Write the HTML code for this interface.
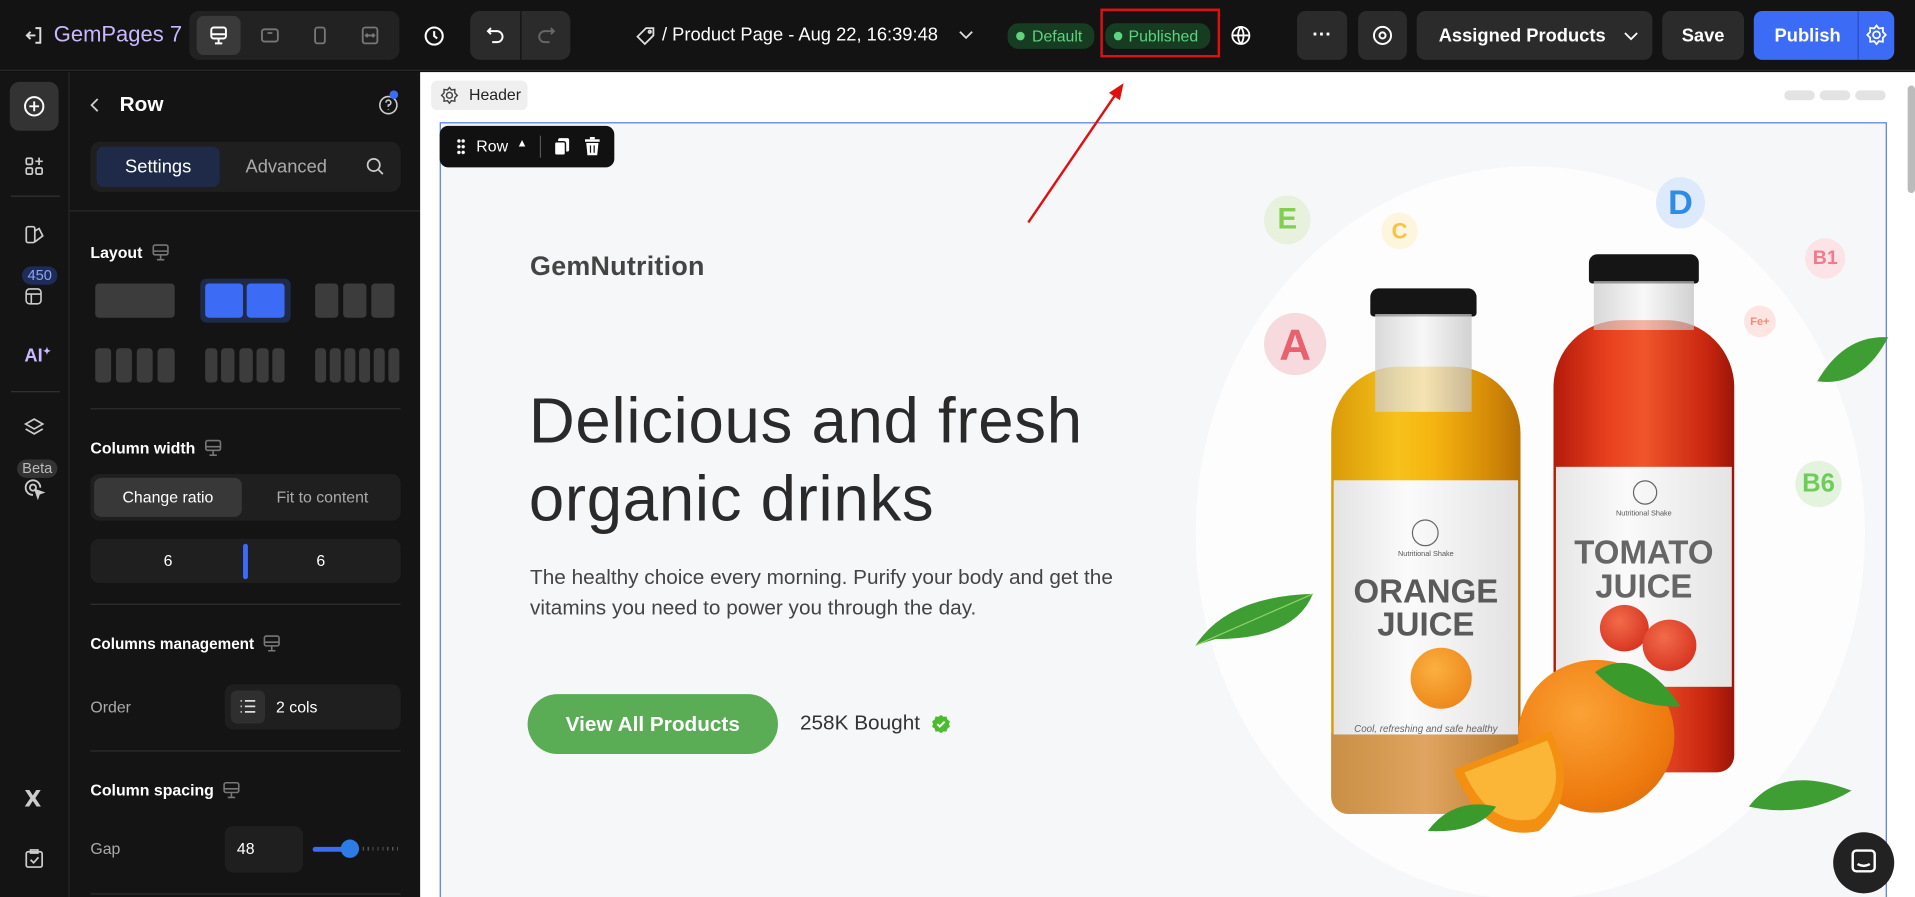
<!DOCTYPE html>
<html><head><meta charset="utf-8"><style>
*{box-sizing:border-box;margin:0;padding:0}
html,body{width:1915px;height:897px;overflow:hidden;background:#111}
#w{position:absolute;left:0;top:0;width:1568px;height:734px;transform:scale(1.22130,1.22207);transform-origin:0 0;font-family:"Liberation Sans",sans-serif;overflow:hidden;background:#111}
.a{position:absolute}
.btn{position:absolute;background:#2b2b2b;border-radius:7px;color:#fff;display:flex;align-items:center;justify-content:center;font-weight:bold;font-size:16px}
.lbl{position:absolute;color:#fff;font-weight:bold;font-size:13px;display:flex;align-items:center;gap:7px}
.sub{position:absolute;color:#aaa;font-size:13px}
.blk{position:absolute;background:#3c3c3c;border-radius:3px}
.hr{position:absolute;left:74px;width:254px;height:1px;background:#2e2e2e}
.vit{position:absolute;border-radius:50%;display:flex;align-items:center;justify-content:center;font-weight:bold}
</style></head><body><div id="w">
<!-- top bar -->
<div class="a" style="left:0;top:0;width:1568px;height:58px;background:#131313;border-bottom:1px solid #2a2a2a"></div>
<svg class="a" style="left:19px;top:20px" width="18" height="18" viewBox="0 0 18 18" fill="none" stroke="#ddd" stroke-width="1.6"><path d="M10 3H14V15H10M3 9H10M6 6L3 9L6 12"/></svg>
<div class="a" style="left:44px;top:18px;color:#c9b8ff;font-size:18px">GemPages 7</div>
<div class="a" style="left:155px;top:9px;width:172px;height:40px;background:#222;border-radius:8px"></div>
<div class="a" style="left:161px;top:13px;width:36px;height:32px;background:#3a3a3a;border-radius:6px"></div>
<svg class="a" style="left:171px;top:21px" width="16" height="16" viewBox="0 0 16 16" fill="none" stroke="#fff" stroke-width="1.6"><rect x="2" y="1.5" width="12" height="9" rx="2"/><path d="M2 7H14M8 11V14M5 14.5H11"/></svg>
<svg class="a" style="left:213px;top:21px" width="16" height="16" viewBox="0 0 16 16" fill="none" stroke="#777" stroke-width="1.5"><rect x="1.5" y="3" width="13" height="10" rx="2"/><path d="M6 6H10"/></svg>
<svg class="a" style="left:254px;top:21px" width="16" height="16" viewBox="0 0 16 16" fill="none" stroke="#777" stroke-width="1.5"><rect x="4" y="1.5" width="8" height="13" rx="2"/></svg>
<svg class="a" style="left:295px;top:21px" width="16" height="16" viewBox="0 0 16 16" fill="none" stroke="#777" stroke-width="1.5"><rect x="2" y="1.5" width="12" height="13" rx="2"/><path d="M5 8H11M6 6.5L4.5 8L6 9.5M10 6.5L11.5 8L10 9.5"/></svg>
<svg class="a" style="left:347px;top:21px" width="17" height="17" viewBox="0 0 17 17" fill="none" stroke="#fff" stroke-width="1.7"><circle cx="8.5" cy="8.5" r="7"/><path d="M8.5 4.5V8.5L11 10.5"/></svg>
<div class="a" style="left:385px;top:9px;width:82px;height:40px;background:#2b2b2b;border-radius:8px"></div>
<div class="a" style="left:426px;top:9px;width:1px;height:40px;background:#111"></div>
<svg class="a" style="left:397px;top:20px" width="18" height="18" viewBox="0 0 18 18" fill="none" stroke="#fff" stroke-width="1.6"><path d="M5 3L2.5 5.5L5 8M3 5.5H10A4.5 4.5 0 0 1 10 14.5H6"/></svg>
<svg class="a" style="left:438px;top:20px" width="18" height="18" viewBox="0 0 18 18" fill="none" stroke="#666" stroke-width="1.6"><path d="M13 3L15.5 5.5L13 8M15 5.5H8A4.5 4.5 0 0 0 8 14.5H12"/></svg>
<svg class="a" style="left:520px;top:21px" width="17" height="17" viewBox="0 0 17 17" fill="none" stroke="#ddd" stroke-width="1.5"><path d="M9 2H15V8L8 15L2 9Z"/><circle cx="12" cy="5" r="1"/></svg>
<div class="a" style="left:542px;top:20px;color:#fff;font-size:15px">/ Product Page - Aug 22, 16:39:48</div>
<svg class="a" style="left:784px;top:24px" width="14" height="10" viewBox="0 0 14 10" fill="none" stroke="#ddd" stroke-width="1.5"><path d="M2 2L7 7L12 2"/></svg>
<div class="a" style="left:825px;top:19px;width:71px;height:21px;background:#163d22;border-radius:9px;color:#5fd37e;font-size:13px;line-height:21px;padding-left:20px">Default</div>
<div class="a" style="left:832px;top:26px;width:7px;height:7px;border-radius:50%;background:#5fd37e"></div>
<div class="a" style="left:905px;top:19px;width:86px;height:21px;background:#163d22;border-radius:9px;color:#5fd37e;font-size:13px;line-height:21px;padding-left:19px">Published</div>
<div class="a" style="left:912px;top:26px;width:7px;height:7px;border-radius:50%;background:#5fd37e"></div>
<div class="a" style="left:901px;top:7px;width:98px;height:40px;border:2px solid #e01010"></div>
<svg class="a" style="left:1006px;top:20px" width="20" height="20" viewBox="0 0 20 20" fill="none" stroke="#fff" stroke-width="1.5"><circle cx="10" cy="9" r="7"/><path d="M3 9H17M10 2C7 6 7 12 10 16M10 2C13 6 13 12 10 16"/></svg>
<div class="btn" style="left:1062px;top:9px;width:41px;height:40px">···</div>
<div class="btn" style="left:1112px;top:9px;width:40px;height:40px"><svg width="18" height="18" viewBox="0 0 18 18" fill="none" stroke="#fff" stroke-width="1.6"><circle cx="9" cy="9" r="7"/><circle cx="9" cy="9" r="2.5"/></svg></div>
<div class="btn" style="left:1160px;top:9px;width:193px;height:40px;justify-content:flex-start;padding-left:18px;font-size:15px">Assigned Products<svg style="margin-left:14px" width="13" height="9" viewBox="0 0 13 9" fill="none" stroke="#fff" stroke-width="1.5"><path d="M1.5 2L6.5 7L11.5 2"/></svg></div>
<div class="btn" style="left:1361px;top:9px;width:67px;height:40px;font-size:15px">Save</div>
<div class="btn" style="left:1436px;top:9px;width:115px;height:40px;background:#3c6cf6;justify-content:flex-start;padding-left:17px;font-size:15px">Publish</div>
<div class="a" style="left:1521px;top:9px;width:1px;height:40px;background:#2a4fc0"></div>
<svg class="a" style="left:1527px;top:19px" width="19" height="19" viewBox="0 0 20 20" fill="none" stroke="#fff" stroke-width="1.5"><circle cx="10" cy="10" r="3"/><path d="M10 2L12 4.5L15.5 4L15.5 7.5L18 10L15.5 12.5L15.5 16L12 15.5L10 18L8 15.5L4.5 16L4.5 12.5L2 10L4.5 7.5L4.5 4L8 4.5Z"/></svg>

<!-- left rail -->
<div class="a" style="left:0;top:59px;width:57px;height:675px;background:#141414;border-right:1px solid #2a2a2a"></div>
<div class="a" style="left:8px;top:67px;width:40px;height:40px;background:#333;border-radius:8px"></div>
<svg class="a" style="left:18px;top:77px" width="20" height="20" viewBox="0 0 20 20" fill="none" stroke="#fff" stroke-width="1.6"><circle cx="10" cy="10" r="7.5"/><path d="M10 6V14M6 10H14"/></svg>
<svg class="a" style="left:20px;top:128px" width="16" height="16" viewBox="0 0 16 16" fill="none" stroke="#ccc" stroke-width="1.4"><rect x="1.5" y="1.5" width="5" height="5" rx="1"/><rect x="1.5" y="9.5" width="5" height="5" rx="1"/><rect x="9.5" y="9.5" width="5" height="5" rx="1"/><path d="M12 1V7M9 4H15"/></svg>
<div class="a" style="left:9px;top:160px;width:40px;height:1px;background:#333"></div>
<svg class="a" style="left:20px;top:184px" width="16" height="16" viewBox="0 0 16 16" fill="none" stroke="#ccc" stroke-width="1.4"><rect x="1.5" y="1.5" width="7" height="13" rx="1.5"/><path d="M8.5 5L12 3L15 9L8.5 14"/></svg>
<div class="a" style="left:18px;top:218px;width:29px;height:15px;border-radius:8px;background:#1f2c55;color:#8aa4ff;font-size:12px;text-align:center;line-height:15px">450</div>
<svg class="a" style="left:20px;top:235px" width="15" height="15" viewBox="0 0 16 16" fill="none" stroke="#ccc" stroke-width="1.4"><rect x="1.5" y="1.5" width="13" height="13" rx="3"/><path d="M1.5 6H14.5M6 6V14.5"/></svg>
<div class="a" style="left:20px;top:283px;color:#c9b8ff;font-weight:bold;font-size:15px">AI<sup style="font-size:8px">✦</sup></div>
<div class="a" style="left:9px;top:320px;width:40px;height:1px;background:#333"></div>
<svg class="a" style="left:19px;top:341px" width="18" height="18" viewBox="0 0 18 18" fill="none" stroke="#ccc" stroke-width="1.4"><path d="M9 2L16 6L9 10L2 6Z"/><path d="M2 10L9 14L16 10"/></svg>
<div class="a" style="left:14px;top:376px;width:33px;height:15px;border-radius:8px;background:#333;color:#bbb;font-size:12px;text-align:center;line-height:15px">Beta</div>
<svg class="a" style="left:19px;top:391px" width="18" height="18" viewBox="0 0 18 18" fill="none" stroke="#ccc" stroke-width="1.5"><path d="M14 8A6 6 0 1 0 8 14"/><circle cx="8" cy="8" r="2.5"/><path d="M10 10L16 12L13 13L12 16Z" fill="#ccc"/></svg>
<div class="a" style="left:20px;top:644px;color:#ccc;font-weight:bold;font-size:18px;font-family:'DejaVu Sans'">X</div>
<svg class="a" style="left:20px;top:694px" width="16" height="17" viewBox="0 0 16 17" fill="none" stroke="#ccc" stroke-width="1.4"><rect x="1.5" y="3" width="13" height="12.5" rx="1.5"/><path d="M5 1.5H11V4H5Z"/><path d="M5 9.5L7.5 12L11.5 7.5"/></svg>

<!-- settings panel -->
<div class="a" style="left:57px;top:59px;width:287px;height:675px;background:#141414"></div>
<svg class="a" style="left:72px;top:79px" width="12" height="14" viewBox="0 0 12 14" fill="none" stroke="#ccc" stroke-width="1.5"><path d="M8 2L3 7L8 12"/></svg>
<div class="a" style="left:98px;top:76px;color:#fff;font-weight:bold;font-size:17px">Row</div>
<svg class="a" style="left:309px;top:77px" width="18" height="18" viewBox="0 0 18 18" fill="none" stroke="#ccc" stroke-width="1.3"><circle cx="9" cy="9" r="7"/><path d="M7 7A2 2 0 1 1 9 9V10.5M9 12.5V13"/></svg>
<div class="a" style="left:319px;top:74px;width:7px;height:7px;border-radius:50%;background:#3c6cf6"></div>
<div class="a" style="left:74px;top:116px;width:254px;height:41px;background:#1f1f1f;border-radius:8px"></div>
<div class="a" style="left:79px;top:120px;width:101px;height:33px;background:#1e2a48;border-radius:6px;color:#fff;font-size:15px;text-align:center;line-height:33px">Settings</div>
<div class="a" style="left:201px;top:128px;color:#aaa;font-size:15px">Advanced</div>
<svg class="a" style="left:299px;top:128px" width="16" height="16" viewBox="0 0 16 16" fill="none" stroke="#ccc" stroke-width="1.4"><circle cx="7" cy="7" r="5"/><path d="M11 11L14.5 14.5"/></svg>
<div class="a" style="left:57px;top:172px;width:287px;height:1px;background:#2a2a2a"></div>
<div class="lbl" style="left:74px;top:199px">Layout<svg width="15" height="15" viewBox="0 0 15 15" fill="none" stroke="#777" stroke-width="1.3"><rect x="1.5" y="1.5" width="12" height="8" rx="1.5"/><path d="M1.5 6.5H13.5M7.5 10V13M4.5 13.5H10.5"/></svg></div>
<div class="blk" style="left:78px;top:232px;width:65px;height:28px"></div>
<div class="a" style="left:164px;top:228px;width:74px;height:36px;background:#1e2a48;border-radius:5px"></div>
<div class="a" style="left:168px;top:232px;width:31px;height:28px;background:#3c6cf6;border-radius:3px"></div>
<div class="a" style="left:202px;top:232px;width:31px;height:28px;background:#3c6cf6;border-radius:3px"></div>
<div class="blk" style="left:258px;top:232px;width:19px;height:28px"></div><div class="blk" style="left:281px;top:232px;width:19px;height:28px"></div><div class="blk" style="left:304px;top:232px;width:19px;height:28px"></div>
<div class="blk" style="left:78px;top:285px;width:13px;height:28px"></div><div class="blk" style="left:95px;top:285px;width:13px;height:28px"></div><div class="blk" style="left:112px;top:285px;width:13px;height:28px"></div><div class="blk" style="left:129px;top:285px;width:14px;height:28px"></div>
<div class="blk" style="left:168px;top:285px;width:10px;height:28px"></div><div class="blk" style="left:181px;top:285px;width:11px;height:28px"></div><div class="blk" style="left:196px;top:285px;width:11px;height:28px"></div><div class="blk" style="left:210px;top:285px;width:10px;height:28px"></div><div class="blk" style="left:223px;top:285px;width:10px;height:28px"></div>
<div class="blk" style="left:258px;top:285px;width:9px;height:28px"></div><div class="blk" style="left:270px;top:285px;width:9px;height:28px"></div><div class="blk" style="left:282px;top:285px;width:9px;height:28px"></div><div class="blk" style="left:294px;top:285px;width:9px;height:28px"></div><div class="blk" style="left:306px;top:285px;width:9px;height:28px"></div><div class="blk" style="left:318px;top:285px;width:9px;height:28px"></div>
<div class="hr" style="top:334px"></div>
<div class="lbl" style="left:74px;top:359px">Column width<svg width="15" height="15" viewBox="0 0 15 15" fill="none" stroke="#777" stroke-width="1.3"><rect x="1.5" y="1.5" width="12" height="8" rx="1.5"/><path d="M1.5 6.5H13.5M7.5 10V13M4.5 13.5H10.5"/></svg></div>
<div class="a" style="left:74px;top:388px;width:254px;height:38px;background:#1f1f1f;border-radius:7px"></div>
<div class="a" style="left:77px;top:391px;width:121px;height:32px;background:#383838;border-radius:6px;color:#fff;font-size:13px;text-align:center;line-height:32px">Change ratio</div>
<div class="a" style="left:200px;top:391px;width:128px;height:32px;color:#aaa;font-size:13px;text-align:center;line-height:32px">Fit to content</div>
<div class="a" style="left:74px;top:441px;width:254px;height:36px;background:#1f1f1f;border-radius:7px"></div>
<div class="a" style="left:134px;top:451px;color:#fff;font-size:13px">6</div>
<div class="a" style="left:259px;top:451px;color:#fff;font-size:13px">6</div>
<div class="a" style="left:199px;top:445px;width:4px;height:29px;background:#3c6cf6;border-radius:2px"></div>
<div class="hr" style="top:494px"></div>
<div class="lbl" style="left:74px;top:519px;font-size:12.5px">Columns management<svg width="15" height="15" viewBox="0 0 15 15" fill="none" stroke="#777" stroke-width="1.3"><rect x="1.5" y="1.5" width="12" height="8" rx="1.5"/><path d="M1.5 6.5H13.5M7.5 10V13M4.5 13.5H10.5"/></svg></div>
<div class="sub" style="left:74px;top:571px">Order</div>
<div class="a" style="left:184px;top:560px;width:144px;height:37px;background:#1f1f1f;border-radius:7px"></div>
<div class="a" style="left:189px;top:565px;width:28px;height:27px;background:#2f2f2f;border-radius:5px"></div>
<svg class="a" style="left:196px;top:572px" width="14" height="12" viewBox="0 0 14 12" fill="none" stroke="#ddd" stroke-width="1.4"><path d="M1 1.5H2M1 6H2M1 10.5H2M4.5 1.5H13M4.5 6H13M4.5 10.5H13"/></svg>
<div class="a" style="left:226px;top:571px;color:#fff;font-size:13px">2 cols</div>
<div class="hr" style="top:614px"></div>
<div class="lbl" style="left:74px;top:639px">Column spacing<svg width="15" height="15" viewBox="0 0 15 15" fill="none" stroke="#777" stroke-width="1.3"><rect x="1.5" y="1.5" width="12" height="8" rx="1.5"/><path d="M1.5 6.5H13.5M7.5 10V13M4.5 13.5H10.5"/></svg></div>
<div class="sub" style="left:74px;top:687px">Gap</div>
<div class="a" style="left:184px;top:676px;width:64px;height:38px;background:#1f1f1f;border-radius:7px;color:#fff;font-size:13px;line-height:38px;padding-left:10px">48</div>
<div class="a" style="left:256px;top:693px;width:32px;height:4px;background:#3c6cf6;border-radius:2px"></div>
<div class="a" style="left:279px;top:687px;width:15px;height:15px;background:#2d7be5;border-radius:50%"></div>
<div class="a" style="left:297px;top:693px;width:30px;height:3px;background:repeating-linear-gradient(90deg,#555 0 1px,transparent 1px 4px)"></div>
<div class="hr" style="top:731px"></div>

<!-- canvas -->
<div class="a" style="left:344px;top:59px;width:1224px;height:675px;background:#fff"></div>
<div class="a" style="left:353px;top:66px;width:79px;height:24px;background:#efefef;border-radius:5px;font-size:13px;color:#222;line-height:24px;padding-left:31px">Header</div>
<svg class="a" style="left:360px;top:70px" width="16" height="16" viewBox="0 0 20 20" fill="none" stroke="#444" stroke-width="1.5"><circle cx="10" cy="10" r="3"/><path d="M10 2L12 4.5L15.5 4L15.5 7.5L18 10L15.5 12.5L15.5 16L12 15.5L10 18L8 15.5L4.5 16L4.5 12.5L2 10L4.5 7.5L4.5 4L8 4.5Z"/></svg>
<div class="a" style="left:1461px;top:74px;width:25px;height:8px;background:#e3e3e3;border-radius:4px"></div>
<div class="a" style="left:1490px;top:74px;width:25px;height:8px;background:#e3e3e3;border-radius:4px"></div>
<div class="a" style="left:1519px;top:74px;width:25px;height:8px;background:#e3e3e3;border-radius:4px"></div>
<div class="a" style="left:1562px;top:70px;width:6px;height:88px;background:#bbb;border-radius:3px"></div>
<div class="a" style="left:360px;top:100px;width:1185px;height:640px;background:#f6f7f9;border:1px solid #5a7de0;overflow:hidden">
  <div class="a" style="left:618px;top:35px;width:548px;height:600px;border-radius:50%;background:#fdfdfe"></div>
</div>
<!-- row toolbar -->
<div class="a" style="left:360px;top:103px;width:143px;height:34px;background:#111;border-radius:7px"></div>
<div class="a" style="left:374px;top:113px;width:7px;height:14px;background:radial-gradient(circle,#fff 1.2px,transparent 1.6px) 0 0/3.5px 4.7px"></div>
<div class="a" style="left:390px;top:112px;color:#fff;font-size:13px">Row</div>
<div class="a" style="left:423px;top:112px;color:#fff;font-size:9px">▲</div>
<div class="a" style="left:442px;top:111px;width:1px;height:18px;background:#555"></div>
<svg class="a" style="left:453px;top:112px" width="14" height="16" viewBox="0 0 14 16" fill="#fff"><rect x="4" y="1" width="9" height="11" rx="1.5"/><rect x="1" y="4" width="9" height="11" rx="1.5" stroke="#111" stroke-width="1.2"/></svg>
<svg class="a" style="left:478px;top:112px" width="14" height="16" viewBox="0 0 14 16" fill="#fff"><rect x="1" y="2" width="12" height="2"/><rect x="5" y="0" width="4" height="2"/><path d="M2 5H12L11 15H3Z"/><path d="M5.5 7V13M8.5 7V13" stroke="#111" stroke-width="1"/></svg>

<!-- hero text -->
<div class="a" style="left:434px;top:205px;color:#444;font-weight:bold;font-size:22px;letter-spacing:0.2px">GemNutrition</div>
<div class="a" style="left:433px;top:313px;color:#2a2a2a;font-size:52px;line-height:64px;letter-spacing:0.6px">Delicious and fresh<br>organic drinks</div>
<div class="a" style="left:434px;top:460px;color:#444;font-size:17px;line-height:25px">The healthy choice every morning. Purify your body and get the<br>vitamins you need to power you through the day.</div>
<div class="a" style="left:432px;top:568px;width:205px;height:49px;background:#5aac55;border-radius:25px;color:#fff;font-weight:bold;font-size:17px;text-align:center;line-height:49px">View All Products</div>
<div class="a" style="left:655px;top:582px;color:#333;font-size:17px">258K Bought</div>
<svg class="a" style="left:762px;top:584px" width="17" height="17" viewBox="0 0 17 17"><path d="M8.5 1L10.5 2.5L13 2.3L13.7 4.8L15.8 6.3L15 8.5L15.8 10.7L13.7 12.2L13 14.7L10.5 14.5L8.5 16L6.5 14.5L4 14.7L3.3 12.2L1.2 10.7L2 8.5L1.2 6.3L3.3 4.8L4 2.3L6.5 2.5Z" fill="#4cbb2f"/><path d="M5.5 8.5L7.5 10.5L11.5 6.5" stroke="#fff" stroke-width="1.6" fill="none"/></svg>

<!-- vitamins -->
<div class="vit" style="left:1035px;top:160px;width:38px;height:40px;background:#e8f0de;color:#7fcf50;font-size:24px">E</div>
<div class="vit" style="left:1131px;top:174px;width:30px;height:30px;background:#fdf5de;color:#f5c445;font-size:18px">C</div>
<div class="vit" style="left:1356px;top:145px;width:40px;height:42px;background:#dceafb;color:#2d8ce8;font-size:28px">D</div>
<div class="vit" style="left:1478px;top:195px;width:33px;height:33px;background:#fbe3e6;color:#f07a8e;font-size:16px">B1</div>
<div class="vit" style="left:1428px;top:250px;width:26px;height:26px;background:#fde6e2;color:#f08a7a;font-size:9px">Fe+</div>
<div class="vit" style="left:1035px;top:256px;width:51px;height:51px;background:#f7dadd;color:#e8616d;font-size:36px">A</div>
<div class="vit" style="left:1470px;top:377px;width:38px;height:38px;background:#e3f3dd;color:#6ecb5c;font-size:21px">B6</div>

<!-- leaves -->
<svg class="a" style="left:975px;top:478px" width="110" height="60" viewBox="0 0 110 60"><path d="M4 50Q30 10 100 8Q85 45 20 45Z" fill="#3f9e33"/><path d="M4 50Q50 30 100 8" stroke="#8fd36a" stroke-width="1" fill="none"/></svg>
<svg class="a" style="left:1480px;top:272px" width="70" height="50" viewBox="0 0 70 50"><path d="M66 4Q30 2 8 40Q45 45 66 4Z" fill="#3f9e33"/></svg>
<svg class="a" style="left:1428px;top:625px" width="92" height="45" viewBox="0 0 92 45"><path d="M4 35Q30 0 88 22Q50 45 4 35Z" fill="#3f9e33"/></svg>

<!-- red bottle -->
<div class="a" style="left:1301px;top:208px;width:90px;height:24px;background:#151515;border-radius:7px 7px 3px 3px"></div>
<div class="a" style="left:1272px;top:262px;width:148px;height:370px;background:linear-gradient(90deg,#b31a0a,#e8401e 30%,#f0552b 50%,#c8260f 85%,#9c1508);border-radius:55px 55px 14px 14px"></div>
<div class="a" style="left:1305px;top:230px;width:82px;height:40px;background:linear-gradient(90deg,rgba(200,200,200,.7),rgba(245,245,245,.6),rgba(190,190,190,.7))"></div>
<div class="a" style="left:1274px;top:382px;width:144px;height:180px;background:linear-gradient(90deg,#e6e6e6,#fafafa 40%,#e4e4e4)"></div>
<div class="a" style="left:1337px;top:393px;width:20px;height:20px;border:1.5px solid #666;border-radius:50%"></div>
<div class="a" style="left:1276px;top:418px;width:140px;text-align:center;color:#555;font-size:6px">Nutritional Shake</div>
<div class="a" style="left:1276px;top:438px;width:140px;text-align:center;color:#666;font-weight:bold;font-size:27px;line-height:28px">TOMATO<br>JUICE</div>
<div class="a" style="left:1310px;top:495px;width:40px;height:38px;border-radius:50%;background:radial-gradient(circle at 40% 35%,#f26b4a,#cf2414)"></div>
<div class="a" style="left:1345px;top:507px;width:44px;height:42px;border-radius:50%;background:radial-gradient(circle at 40% 35%,#f26b4a,#cf2414)"></div>
<!-- orange bottle -->
<div class="a" style="left:1122px;top:236px;width:87px;height:23px;background:#151515;border-radius:7px 7px 3px 3px"></div>
<div class="a" style="left:1090px;top:300px;width:155px;height:366px;background:linear-gradient(90deg,#d99a08,#f7c21a 35%,#f5b310 55%,#d28806 85%,#b87005);border-radius:55px 55px 14px 14px"></div>
<div class="a" style="left:1126px;top:257px;width:79px;height:80px;background:linear-gradient(90deg,rgba(205,205,205,.75),rgba(245,245,245,.7),rgba(195,195,195,.75))"></div>
<div class="a" style="left:1090px;top:600px;width:155px;height:66px;background:linear-gradient(90deg,#c98f45,#e0a560 50%,#b87a30);border-radius:0 0 14px 14px"></div>
<div class="a" style="left:1092px;top:393px;width:151px;height:208px;background:linear-gradient(90deg,#e3e3e3,#fbfbfb 40%,#e2e2e2)"></div>
<div class="a" style="left:1156px;top:425px;width:22px;height:22px;border:1.5px solid #666;border-radius:50%"></div>
<div class="a" style="left:1092px;top:451px;width:151px;text-align:center;color:#555;font-size:6px">Nutritional Shake</div>
<div class="a" style="left:1092px;top:471px;width:151px;text-align:center;color:#5a5a5a;font-weight:bold;font-size:27px;line-height:27px">ORANGE<br>JUICE</div>
<div class="a" style="left:1155px;top:530px;width:50px;height:50px;border-radius:50%;background:radial-gradient(circle at 40% 35%,#fbb040,#ea7b10)"></div>
<div class="a" style="left:1102px;top:592px;width:131px;text-align:center;color:#666;font-size:8px;font-style:italic">Cool, refreshing and safe healthy</div>
<!-- big orange -->
<div class="a" style="left:1243px;top:540px;width:128px;height:125px;border-radius:50%;background:radial-gradient(circle at 40% 35%,#fba236,#ef7d10 60%,#d76508)"></div>
<svg class="a" style="left:1300px;top:530px" width="80" height="60" viewBox="0 0 80 60"><path d="M6 20Q40 -4 76 48Q35 50 6 20Z" fill="#3a9a2c"/></svg>
<svg class="a" style="left:1185px;top:590px" width="115" height="100" viewBox="0 0 115 100"><path d="M5 40L85 8Q110 60 75 90Q30 100 5 40Z" fill="#f39012"/><path d="M14 42L82 16Q100 58 72 80Q35 88 14 42Z" fill="#fbb638"/></svg>
<svg class="a" style="left:1165px;top:652px" width="65" height="35" viewBox="0 0 65 35"><path d="M4 28Q25 0 60 8Q45 30 4 28Z" fill="#3a9a2c"/></svg>

<!-- chat bubble -->
<div class="a" style="left:1501px;top:681px;width:50px;height:50px;border-radius:50%;background:#222"></div>
<svg class="a" style="left:1514px;top:693px" width="24" height="24" viewBox="0 0 24 24" fill="none" stroke="#fff" stroke-width="2"><rect x="3" y="3" width="18" height="17" rx="3"/><path d="M7 14Q12 17 17 14"/></svg>

<!-- arrow -->
<svg class="a" style="left:830px;top:60px" width="100" height="130" viewBox="0 0 100 130"><path d="M12 122L85 15" stroke="#e01010" stroke-width="2"/><path d="M90 8L78 16L87 22Z" fill="#e01010"/></svg>
</div></body></html>
